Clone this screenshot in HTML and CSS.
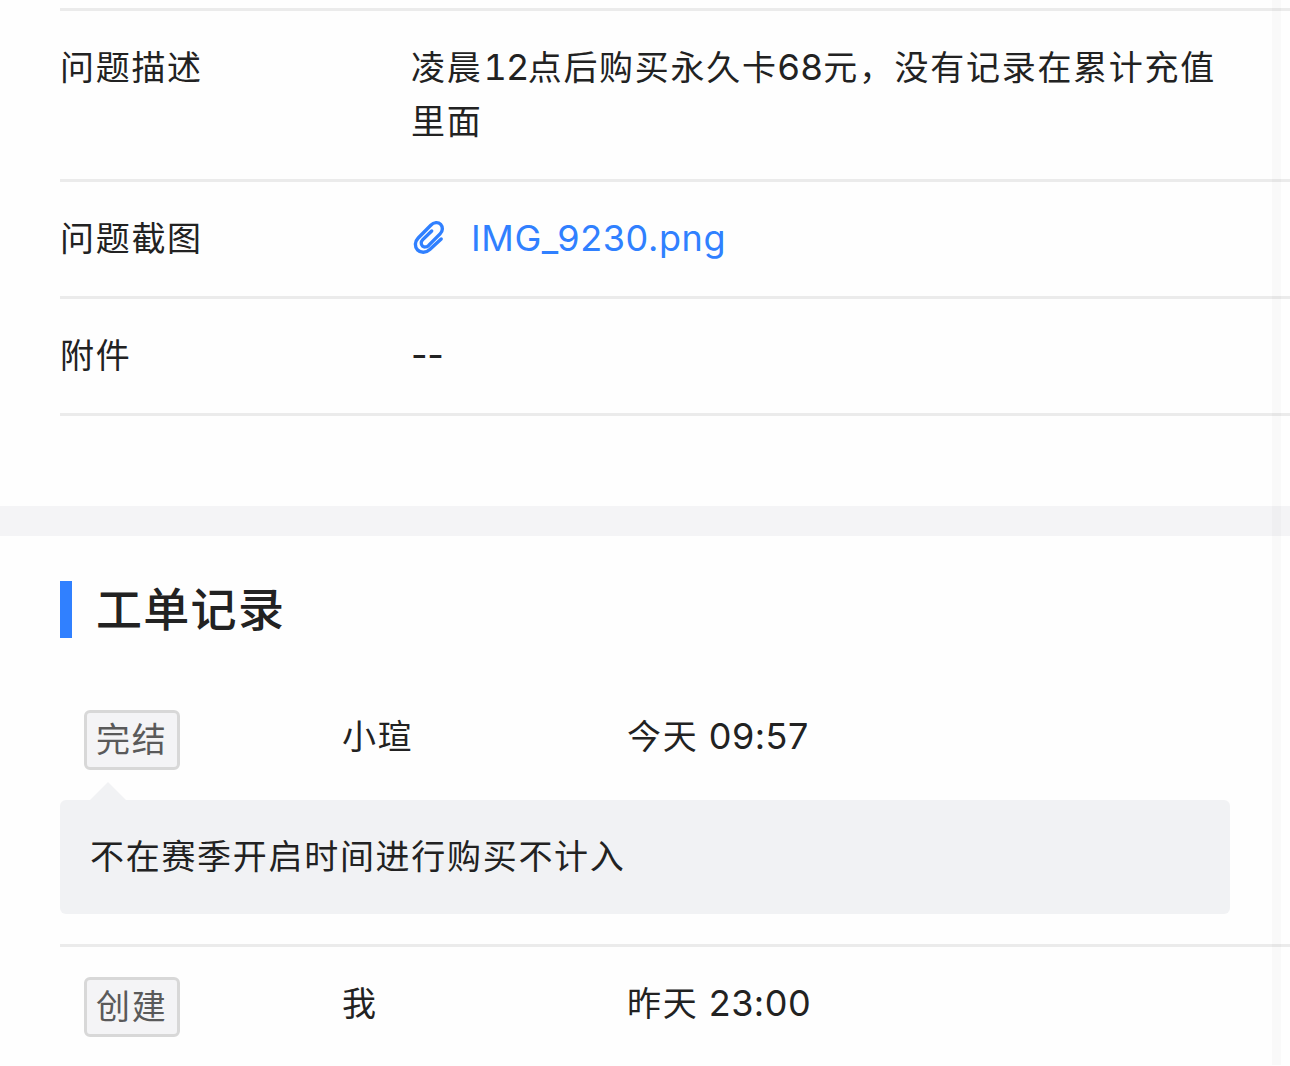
FILE: index.html
```html
<!DOCTYPE html>
<html lang="zh-CN">

<head>
    <meta charset="UTF-8">
    <meta name="viewport" content="width=device-width, initial-scale=1.0">
    <link rel="stylesheet" href="styles.css">
    <title>工单详情</title>
</head>

<body>
    <main class="page">
        <!-- Ticket fields -->
        <section class="fields">
            <div class="field">
                <div class="field-label">问题描述</div>
                <div class="field-value">凌晨<span class="num num-wide">12</span>点后购买永久卡<span class="num">68</span>元，没有记录在累计充值里面</div>
            </div>
            <div class="field">
                <div class="field-label">问题截图</div>
                <div class="field-value">
                    <a class="file" href="#">
                        <svg class="clip" viewBox="0 0 36 36" fill="none" stroke="currentColor" stroke-width="3.4" stroke-linecap="round" stroke-linejoin="round">
                            <path d="M30.2 19L18.8 29.6C15 33.2 9.5 33 6.6 30C3.5 26.8 3.6 21.7 7.2 18L19.8 5.2C22.8 2.1 27.2 1.8 29.7 4.4C32 6.9 32 11 29.1 13.9L17.6 25.4C15.6 27.3 13 27.4 11.4 25.9C9.8 24.3 9.9 21.6 11.8 19.6L20.7 11"/>
                        </svg>
                        <span class="file-name">IMG_9230.png</span>
                    </a>
                </div>
            </div>
            <div class="field">
                <div class="field-label">附件</div>
                <div class="field-value"><span class="dash">--</span></div>
            </div>
        </section>

        <!-- Ticket history -->
        <section class="records">
            <h2 class="title">工单记录</h2>
            <div class="record">
                <div class="record-head">
                    <div class="record-state"><span class="tag">完结</span></div>
                    <div class="record-user">小瑄</div>
                    <div class="record-time">今天 <span class="num">09:57</span></div>
                </div>
                <div class="bubble">不在赛季开启时间进行购买不计入</div>
            </div>
            <div class="record">
                <div class="record-head">
                    <div class="record-state"><span class="tag">创建</span></div>
                    <div class="record-user">我</div>
                    <div class="record-time">昨天 <span class="num">23:00</span></div>
                </div>
            </div>
        </section>
    </main>
    <div class="scrollbar"></div>
</body>

</html>
```

FILE: styles.css
```css
* {
    box-sizing: border-box;
}

body {
    margin: 0;
    height: 1066px;
    overflow: hidden;
    background: #fefefe;
    color: #222;
    font-family: Inter, "Noto Sans CJK SC", sans-serif;
    font-size: 34px;
    line-height: 54px;
    letter-spacing: 1.7px;
}

.num,
.dash,
.file-name {
    font-size: 36px;
    line-height: 1;
    letter-spacing: 0.5px;
}

.dash {
    letter-spacing: -0.3px;
}

.num-wide {
    margin-left: 1px;
    margin-right: -1px;
    font-variant-numeric: tabular-nums;
    letter-spacing: -0.7px;
}

.fields {
    padding: 8px 0 90px 60px;
    border-bottom: 30px solid #f4f4f6;
}

.field {
    display: flex;
    padding: 30px 60px 30px 0;
    border-top: 3px solid #ebebeb;
}

.field:last-child {
    border-bottom: 3px solid #ebebeb;
}

.field-label {
    flex: 0 0 351px;
}

.field-value {
    flex: 1;
}

.file {
    display: flex;
    align-items: center;
    gap: 24px;
    height: 52px;
    color: #3080ff;
    text-decoration: none;
}

.clip {
    width: 36px;
    height: 36px;
}

.file-name {
    letter-spacing: 0.6px;
}

.records {
    padding: 45px 0 0 60px;
}

.title {
    margin: 0 0 42px;
    padding-left: 24px;
    border-left: 12px solid #3080ff;
    font-size: 46px;
    font-weight: 500;
    line-height: 57px;
    letter-spacing: 1.3px;
}

.record {
    padding: 30px 0;
    border-bottom: 3px solid #ebebeb;
}

.record:last-child {
    border-bottom: 0;
}

.record-head {
    display: flex;
    height: 60px;
    padding-left: 24px;
}

.record-state {
    width: 258px;
}

.record-user {
    width: 285px;
}

.record-time {
    word-spacing: -1px;
}

.tag {
    display: block;
    width: 96px;
    height: 60px;
    padding-left: 9px;
    border: 3px solid #d8d8d8;
    border-radius: 6px;
    background: #f4f4f6;
    color: #5a5a5a;
}

.bubble {
    position: relative;
    margin: 30px 60px 0 0;
    padding: 30px;
    border-radius: 6px;
    background: #f1f2f4;
}

/* arrow pointing at the state tag */
.bubble::before {
    content: "";
    position: absolute;
    top: -18px;
    left: 30px;
    border: 18px solid transparent;
    border-top: 0;
    border-bottom-color: #f1f2f4;
}

.scrollbar {
    position: absolute;
    top: 0;
    right: 9px;
    width: 9px;
    height: 1065px;
    background: rgba(0, 0, 0, 0.02);
}
```
